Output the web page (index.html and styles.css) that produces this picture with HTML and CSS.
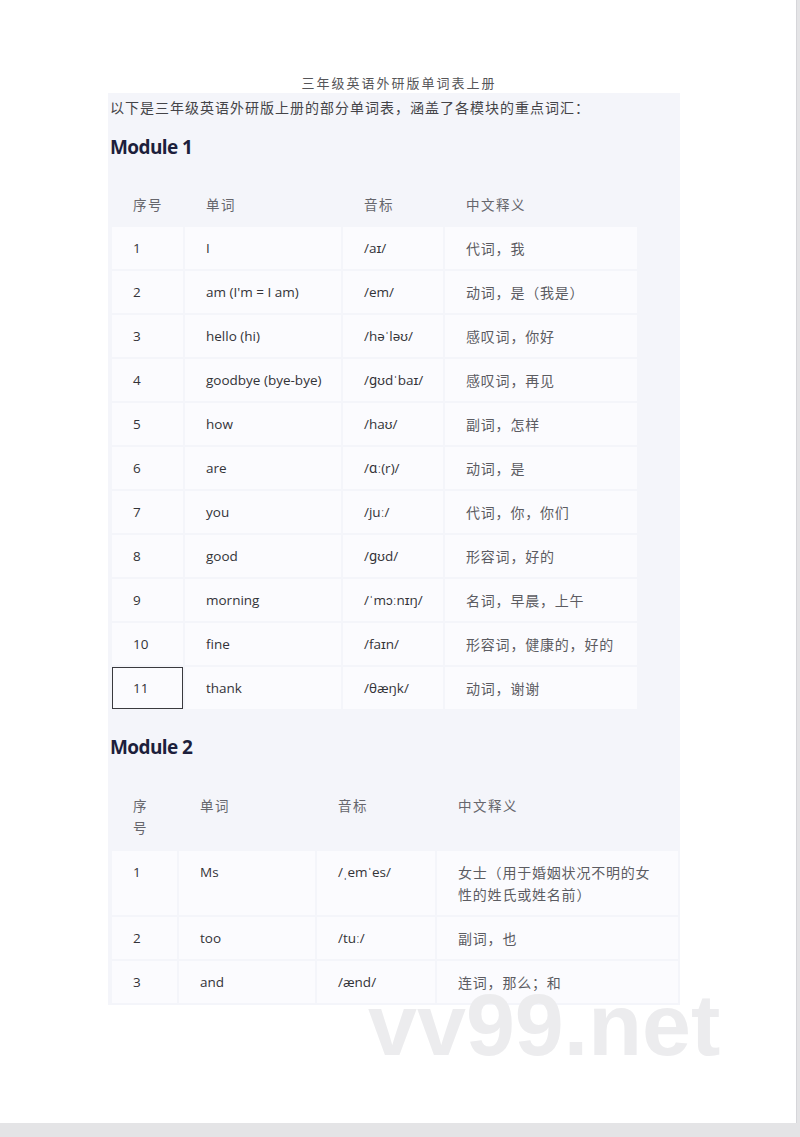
FILE: index.html
```html
<!DOCTYPE html>
<html lang="zh-CN">
<head>
<meta charset="utf-8">
<title>三年级英语外研版单词表上册</title>
<link rel="stylesheet" href="styles.css">
</head>
<body>
<div class="page">
  <h1 class="doc-title">三年级英语外研版单词表上册</h1>
  <div class="panel">
    <p class="intro">以下是三年级英语外研版上册的部分单词表，涵盖了各模块的重点词汇：</p>
    <h2 class="module">Module 1</h2>
    <table class="words t1">
      <thead>
        <tr><th class="c1">序号</th><th class="c2">单词</th><th class="c3">音标</th><th class="c4">中文释义</th></tr>
      </thead>
      <tbody>
        <tr><td>1</td><td>I</td><td>/aɪ/</td><td class="zh">代词，我</td></tr>
        <tr><td>2</td><td>am (I'm = I am)</td><td>/em/</td><td class="zh">动词，是（我是）</td></tr>
        <tr><td>3</td><td>hello (hi)</td><td>/həˈləʊ/</td><td class="zh">感叹词，你好</td></tr>
        <tr><td>4</td><td>goodbye (bye-bye)</td><td>/ɡʊdˈbaɪ/</td><td class="zh">感叹词，再见</td></tr>
        <tr><td>5</td><td>how</td><td>/haʊ/</td><td class="zh">副词，怎样</td></tr>
        <tr><td>6</td><td>are</td><td>/ɑː(r)/</td><td class="zh">动词，是</td></tr>
        <tr><td>7</td><td>you</td><td>/juː/</td><td class="zh">代词，你，你们</td></tr>
        <tr><td>8</td><td>good</td><td>/ɡʊd/</td><td class="zh">形容词，好的</td></tr>
        <tr><td>9</td><td>morning</td><td>/ˈmɔːnɪŋ/</td><td class="zh">名词，早晨，上午</td></tr>
        <tr><td>10</td><td>fine</td><td>/faɪn/</td><td class="zh">形容词，健康的，好的</td></tr>
        <tr><td class="selected">11</td><td>thank</td><td>/θæŋk/</td><td class="zh">动词，谢谢</td></tr>
      </tbody>
    </table>
    <h2 class="module m2">Module 2</h2>
    <table class="words t2">
      <thead>
        <tr><th class="c1">序号</th><th class="c2">单词</th><th class="c3">音标</th><th class="c4">中文释义</th></tr>
      </thead>
      <tbody>
        <tr><td>1</td><td>Ms</td><td>/ˌemˈes/</td><td class="zh">女士（用于婚姻状况不明的女性的姓氏或姓名前）</td></tr>
        <tr><td>2</td><td>too</td><td>/tuː/</td><td class="zh">副词，也</td></tr>
        <tr><td>3</td><td>and</td><td>/ænd/</td><td class="zh">连词，那么；和</td></tr>
      </tbody>
    </table>
  </div>
  <div class="watermark">vv99.net</div>
</div>
</body>
</html>
```

FILE: styles.css
```css
html, body {
  margin: 0;
  padding: 0;
}

body {
  background: #e4e4e6;
  width: 800px;
  height: 1137px;
  overflow: hidden;
  font-family: "Open Sans", "Noto Sans CJK SC", sans-serif;
}

.page {
  position: relative;
  width: 797px;
  height: 1123px;
  background: #ffffff;
  border-right: 1px solid #d6d6da;
  box-sizing: border-box;
  padding-top: 73px;
}

.doc-title {
  margin: 0;
  font-family: "Noto Sans CJK SC", sans-serif;
  font-weight: 400;
  font-size: 13px;
  line-height: 20px;
  letter-spacing: 2px;
  color: #555558;
  text-align: center;
  padding-left: 2px;
}

.panel {
  margin-left: 108px;
  width: 572px;
  background: #f4f5fa;
  padding-left: 2px;
  box-sizing: border-box;
}

.intro {
  margin: 0;
  font-family: "Noto Sans CJK SC", sans-serif;
  font-size: 14px;
  line-height: 28px;
  letter-spacing: 1px;
  color: #444448;
}

.module {
  margin: 12px 0 20px;
  font-family: "Open Sans", sans-serif;
  font-weight: 700;
  font-size: 19px;
  line-height: 28px;
  letter-spacing: -0.6px;
  color: #1d1f3c;
}

.module.m2 {
  margin-top: 22px;
  margin-bottom: 23px;
}

.words {
  border-collapse: separate;
  border-spacing: 2px;
  font-size: 13.5px;
  color: #333338;
}

.words th,
.words td {
  text-align: left;
  vertical-align: top;
  padding: 10px 10px 10px 21px;
  line-height: 22px;
  box-sizing: border-box;
}

.words th {
  font-family: "Noto Sans CJK SC", sans-serif;
  font-weight: 400;
  font-size: 13.5px;
  letter-spacing: 1.5px;
  color: #66666c;
}

.words td {
  background: #fbfbfe;
}

.words td.zh {
  font-family: "Noto Sans CJK SC", sans-serif;
  font-size: 14px;
  letter-spacing: 0.8px;
  color: #5c5c62;
}

.words td.selected {
  outline: 1px solid #3a3a3e;
  outline-offset: -1px;
}

.t1 .c1 { width: 71px; }
.t1 .c2 { width: 156px; }
.t1 .c3 { width: 100px; }
.t1 .c4 { width: 192px; }

.t2 {
  width: 570px;
  table-layout: fixed;
}
.t2 .c1 { width: 65px; padding-right: 20px; }
.t2 .c2 { width: 136px; }
.t2 .c3 { width: 118px; }
.t2 .c4 { width: 241px; }
.t2 td.zh { padding-right: 25px; }
.t2 th { padding-top: 8px; padding-bottom: 11px; }

.watermark {
  position: absolute;
  left: 368px;
  top: 994px;
  font-family: "Liberation Sans", Arial, sans-serif;
  font-weight: 700;
  font-size: 88px;
  line-height: 62px;
  color: #ececee;
  letter-spacing: 0;
}
```
